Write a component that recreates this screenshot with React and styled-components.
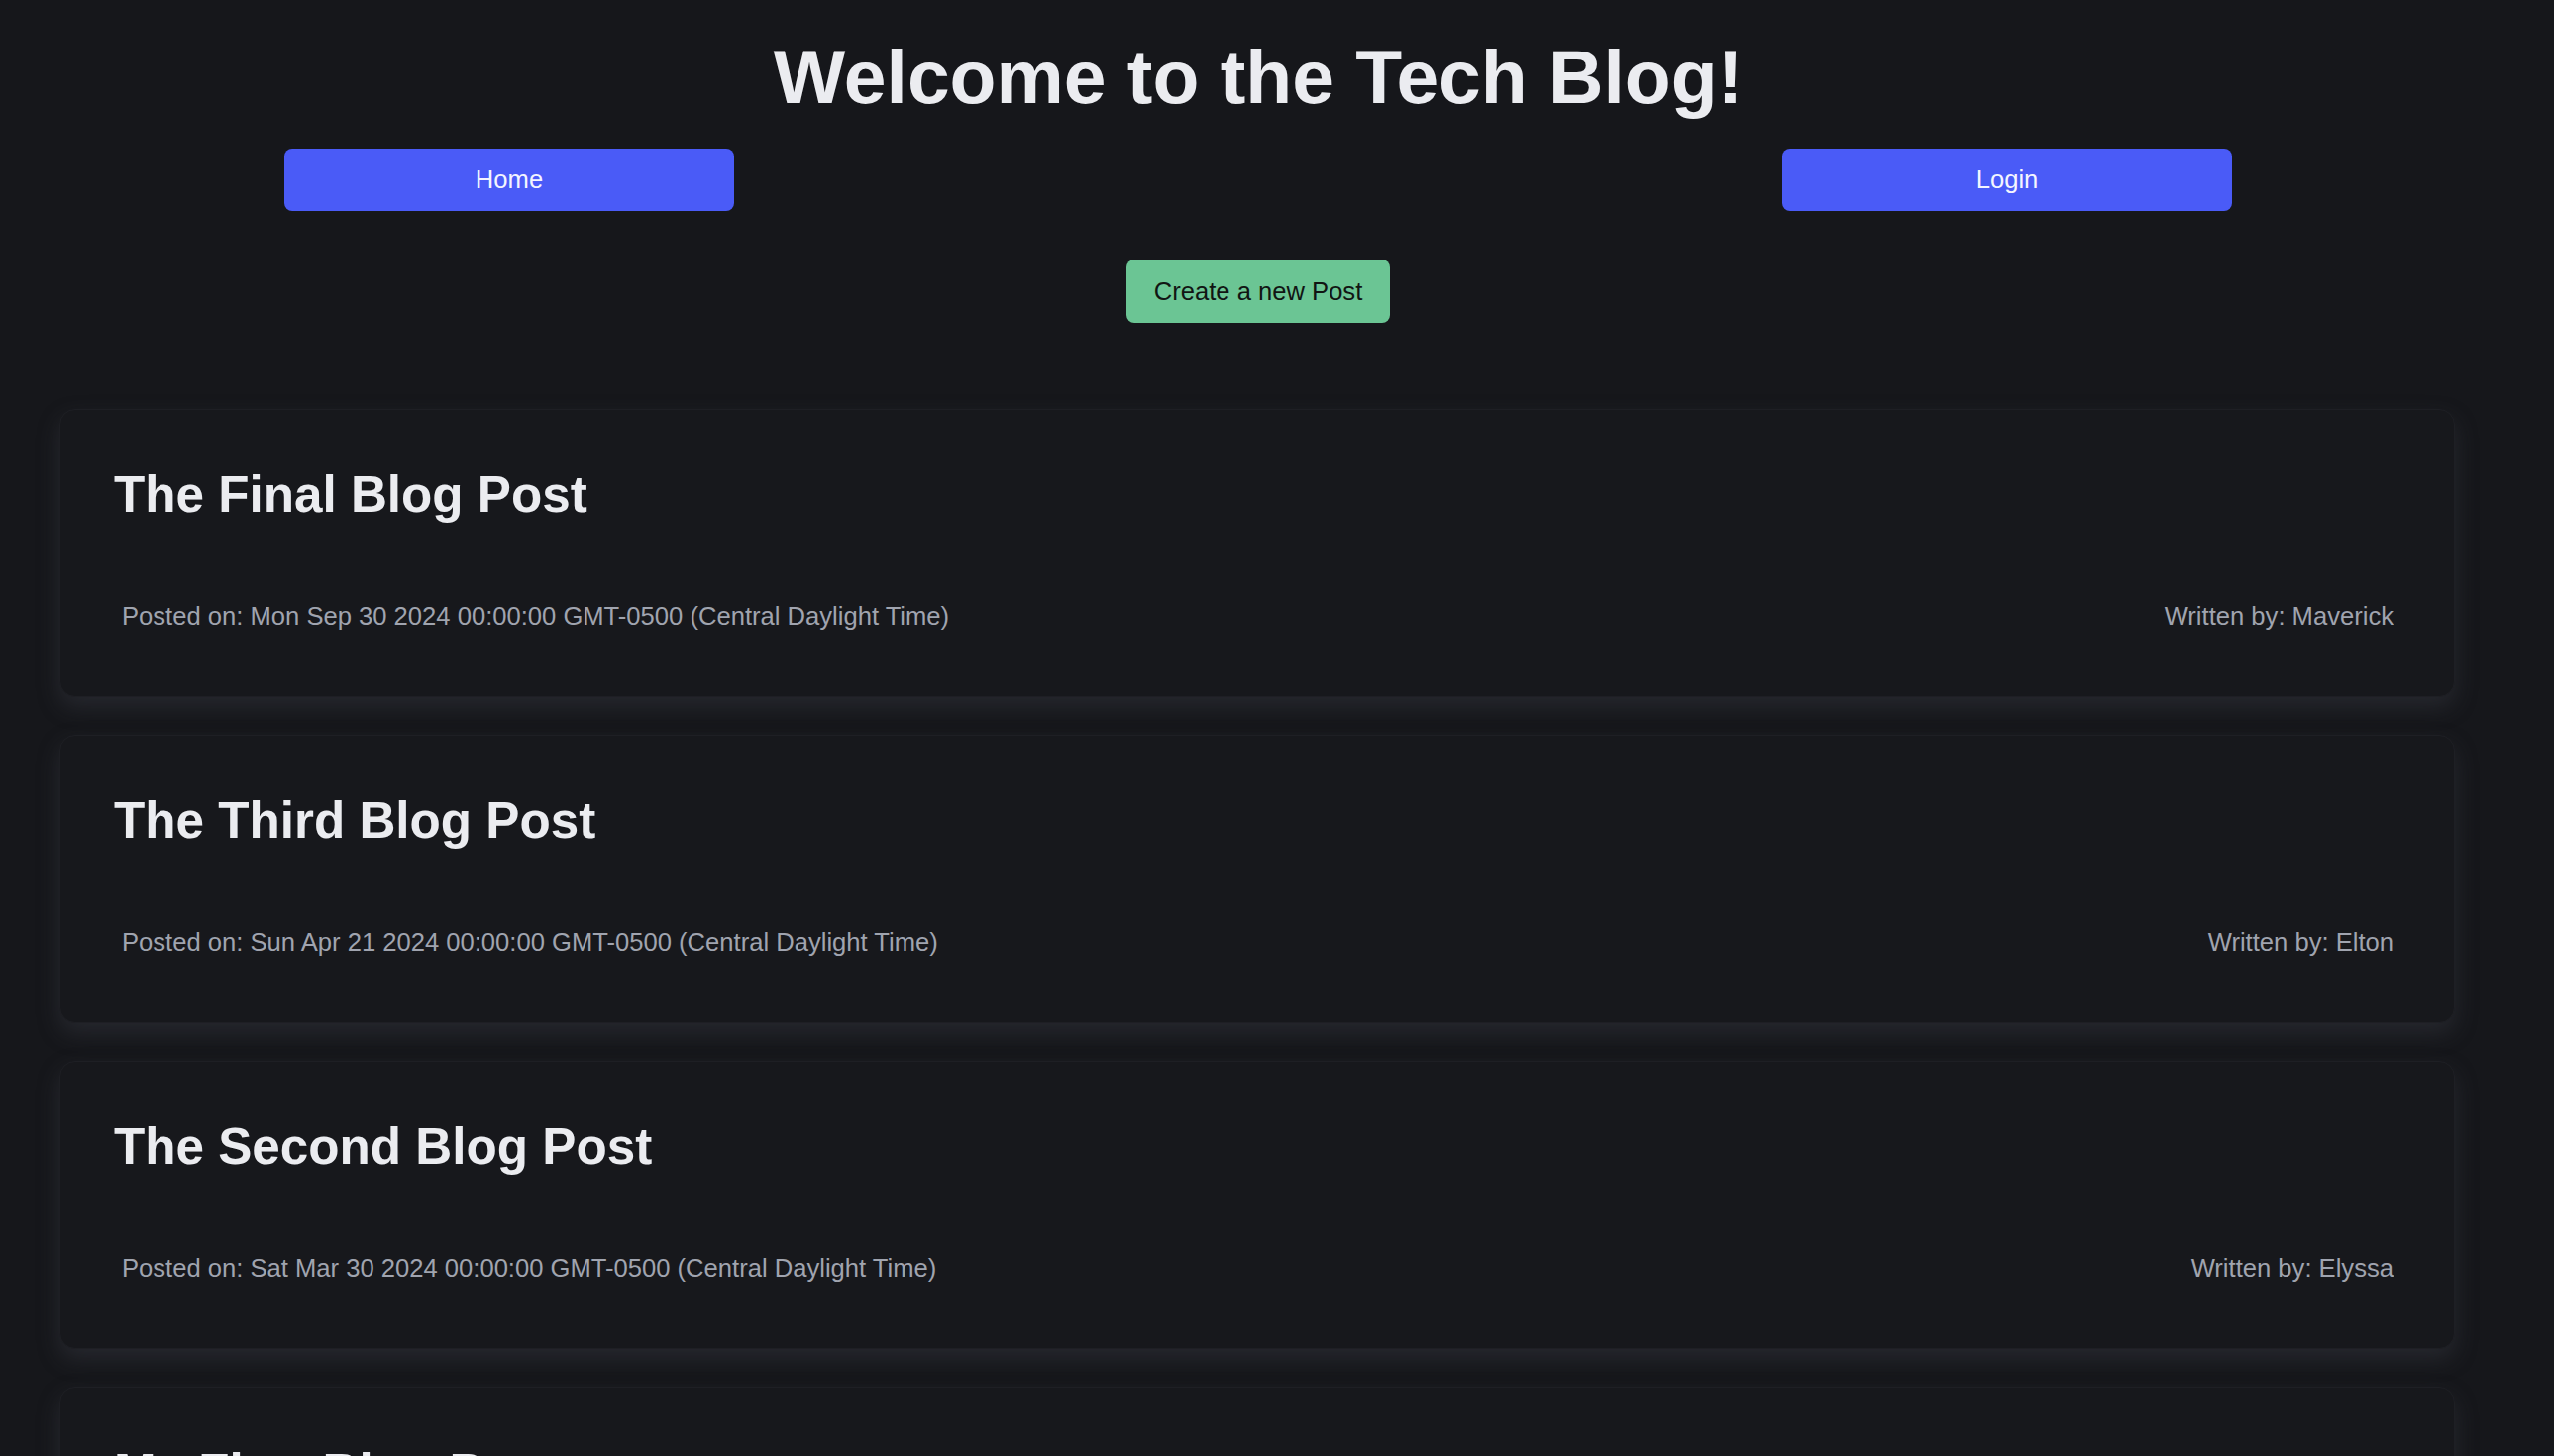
import React from "react";
import styled, { createGlobalStyle } from "styled-components";

const GlobalStyle = createGlobalStyle`
  html, body {
    margin: 0;
    padding: 0;
    background: #16171b;
  }
  body {
    font-family: "Liberation Sans", Arial, Helvetica, sans-serif;
    color: #ebecf0;
  }
`;

const Page = styled.div`
  width: 2540px;
  display: flex;
  flex-direction: column;
  align-items: stretch;
`;

const Header = styled.header`
  display: flex;
  flex-direction: column;
  align-items: center;
`;

const Title = styled.h1`
  margin: 33px 0 0;
  font-size: 76.8px;
  line-height: 88px;
  font-weight: 700;
  color: #ebecf0;
  text-align: center;
`;

const Nav = styled.nav`
  align-self: stretch;
  display: flex;
  justify-content: space-between;
  padding: 0 287px;
  margin-top: 29px;
`;

const NavButton = styled.button`
  width: 454px;
  height: 63px;
  border: none;
  border-radius: 8px;
  background: #4a5bf7;
  color: #f4f5ff;
  font-family: inherit;
  font-size: 25.6px;
  cursor: pointer;
`;

const CreateButton = styled.button`
  margin-top: 49px;
  height: 64px;
  padding: 0 28px;
  border: none;
  border-radius: 8px;
  background: #6bc594;
  color: #111513;
  font-family: inherit;
  font-size: 25.6px;
  cursor: pointer;
`;

const PostList = styled.main`
  display: flex;
  flex-direction: column;
  gap: 38px;
  margin: 87px 62px 60px 60px;
`;

const Card = styled.article`
  background: #17181c;
  border: 1px solid #1e1f24;
  border-radius: 16px;
  padding: 56px 53px 66px 54px;
  box-shadow: 0 10px 22px rgba(58, 60, 68, 0.45);
`;

const PostTitle = styled.h2`
  margin: 0;
  font-size: 51.2px;
  line-height: 59px;
  font-weight: 700;
  color: #ebecf0;
`;

const Meta = styled.div`
  margin-top: 79px;
  padding: 0 8px;
  display: flex;
  justify-content: space-between;
  font-size: 25.6px;
  line-height: 29px;
  color: #a0a4af;
`;

const posts = [
  {
    title: "The Final Blog Post",
    date: "Mon Sep 30 2024 00:00:00 GMT-0500 (Central Daylight Time)",
    author: "Maverick",
  },
  {
    title: "The Third Blog Post",
    date: "Sun Apr 21 2024 00:00:00 GMT-0500 (Central Daylight Time)",
    author: "Elton",
  },
  {
    title: "The Second Blog Post",
    date: "Sat Mar 30 2024 00:00:00 GMT-0500 (Central Daylight Time)",
    author: "Elyssa",
  },
  {
    title: "My First Blog Post",
    date: "Fri Mar 01 2024 00:00:00 GMT-0600 (Central Standard Time)",
    author: "Maverick",
  },
];

export default function App() {
  return (
    <>
      <GlobalStyle />
      <Page>
        <Header>
          <Title>Welcome to the Tech Blog!</Title>
          <Nav>
            <NavButton>Home</NavButton>
            <NavButton>Login</NavButton>
          </Nav>
          <CreateButton>Create a new Post</CreateButton>
        </Header>
        <PostList>
          {posts.map((p) => (
            <Card key={p.title}>
              <PostTitle>{p.title}</PostTitle>
              <Meta>
                <span>Posted on: {p.date}</span>
                <span>Written by: {p.author}</span>
              </Meta>
            </Card>
          ))}
        </PostList>
      </Page>
    </>
  );
}
